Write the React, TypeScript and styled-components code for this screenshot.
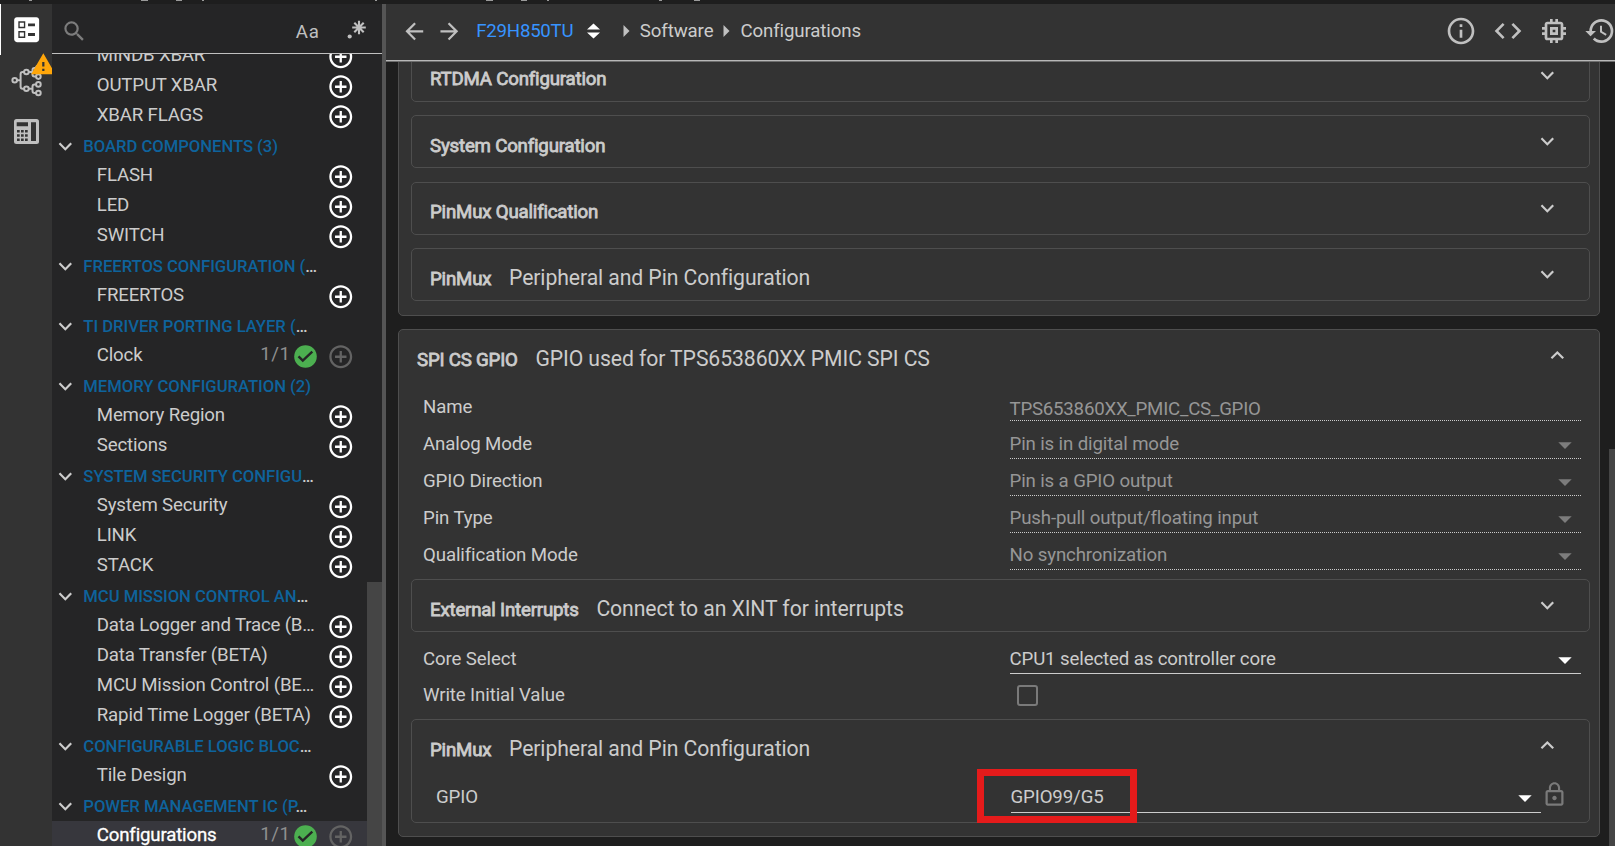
import React from 'react';
import styled, { createGlobalStyle, css } from 'styled-components';
import {
  MdAddCircleOutline,
  MdArrowBack,
  MdArrowDropDown,
  MdArrowForward,
  MdBallot,
  MdCode,
  MdExpandLess,
  MdExpandMore,
  MdHistory,
  MdInfoOutline,
  MdLockOutline,
  MdMemory,
  MdSearch,
  MdWarning,
} from 'react-icons/md';

const color = {
  base: '#1e1e1e',
  side: '#252526',
  panel: '#333333',
  border: '#4e4e4e',
  text: '#cccccc',
  icon: '#c0c0c0',
  dim: '#969696',
  heading: '#0e639c',
  link: '#3794ff',
};

const GlobalStyle = createGlobalStyle`
  * { box-sizing: border-box; }
  body {
    margin: 0;
    background: ${color.base};
    color: ${color.text};
    font-family: Roboto, "Liberation Sans", sans-serif;
    font-size: 18.67px;
    overflow: hidden;
  }
  svg { display: block; flex: none; }
`;

const Page = styled.div`
  display: flex;
  flex-direction: column;
  width: 1615px;
  height: 846px;
  overflow: hidden;
`;

const TopStrip = styled.div`
  flex: none;
  height: 4px;
`;

const Workspace = styled.div`
  display: flex;
  flex: 1;
  min-height: 0;
`;

/* ---------- activity rail ---------- */

const Rail = styled.nav`
  flex: none;
  width: 52px;
  background: ${color.panel};
  display: flex;
  flex-direction: column;
  overflow: hidden;
`;

const RailItem = styled.div<{ $active?: boolean }>`
  position: relative;
  height: 51px;
  display: flex;
  align-items: center;
  justify-content: center;
  border-left: 1px solid ${(p) => (p.$active ? '#fff' : 'transparent')};
  color: ${(p) => (p.$active ? '#fff' : color.icon)};
`;

const WarningBadge = styled.span`
  position: absolute;
  top: -4px;
  left: 28.5px;
  color: #ffa60a;
`;

/* ---------- component tree ---------- */

const Sidebar = styled.aside`
  flex: none;
  width: 330px;
  background: ${color.side};
  display: flex;
  flex-direction: column;
`;

const SearchBar = styled.div`
  flex: none;
  height: 50px;
  display: flex;
  align-items: center;
  padding: 5px 15px 0 9px;
  border-bottom: 1px solid ${color.icon};
  color: #7c7c7c;
`;

const MatchCase = styled.span`
  margin: 1px 27.5px 0 auto;
  color: ${color.icon};
  letter-spacing: 0.7px;
`;

const RegexButton = styled.span`
  margin-top: -2px;
`;

const TreeViewport = styled.div`
  display: flex;
  flex: 1;
  min-height: 0;
  overflow: hidden;
`;

const Tree = styled.div`
  flex: 1;
  min-width: 0;
  margin-top: -13px;
`;

const treeRow = css`
  display: flex;
  align-items: center;
  height: 30px;
  white-space: nowrap;
`;

const Category = styled.div`
  ${treeRow}
  gap: 4.7px;
`;

const CategoryLabel = styled.span`
  padding-top: 2px;
  font-size: 16.67px;
  font-weight: 500;
  line-height: 28px;
  letter-spacing: -0.04px;
  & > b { color: ${color.heading}; font-weight: 500; }
`;

const CategoryChevron = styled.span`
  color: ${color.text};
  font-size: 26.67px;
`;

const Item = styled.div<{ $selected?: boolean }>`
  ${treeRow}
  width: 315px;
  padding: 0 12.6px 0 44.8px;
  color: ${(p) => (p.$selected ? '#fff' : color.text)};
  background: ${(p) => (p.$selected ? '#37373d' : 'transparent')};
`;

const ItemLabel = styled.span<{ $strong?: boolean }>`
  flex: 1;
  line-height: 26px;
  padding-bottom: 2px;
  letter-spacing: -0.18px;
  -webkit-text-stroke: ${(p) => (p.$strong ? '0.3px' : '0')};
`;

const Count = styled.span`
  margin-right: 3.3px;
  padding-bottom: 5px;
  color: #8f8f8f;
  letter-spacing: 0.6px;
`;

const AddButton = styled.span<{ $disabled?: boolean }>`
  margin: 1.5px 0 0 10px;
  color: ${(p) => (p.$disabled ? '#636363' : '#fff')};
`;

const TreeScrollbar = styled.div`
  flex: none;
  width: 15px;
  margin-top: 528px;
  background: #454545;
`;

const Splitter = styled.div`
  flex: none;
  width: 4px;
  background: #555;
`;

/* ---------- main editor ---------- */

const Main = styled.main`
  flex: 1;
  min-width: 0;
  display: flex;
  flex-direction: column;
`;

const Toolbar = styled.header`
  flex: none;
  height: 58px;
  display: flex;
  align-items: center;
  padding: 0 0 3px 14.5px;
  background: ${color.panel};
  border-bottom: 1px solid #6e6e6e;
  box-shadow: inset 0 -1px 0 #b8b8b8;
  color: ${color.icon};
`;

const NavArrows = styled.div`
  display: flex;
  gap: 8.5px;
`;

const Device = styled.span`
  margin: -1px 13.5px 0 14px;
  color: ${color.link};
  letter-spacing: -0.25px;
`;

const Crumb = styled.span`
  margin: -1px 10px 0 10px;
  color: ${color.text};
  letter-spacing: -0.12px;
`;

const CrumbLead = styled.span`
  width: 23px;
`;

const ToolbarActions = styled.div`
  display: flex;
  align-items: center;
  gap: 14.3px;
  margin: 0 -1.2px 0 auto;
`;

const Body = styled.div`
  flex: 1;
  min-height: 0;
  display: flex;
  justify-content: space-between;
  overflow: hidden;
`;

const Cards = styled.div`
  width: 1202px;
  margin: -28px 0 0 12px;
  display: flex;
  flex-direction: column;
  gap: 13px;
`;

const Card = styled.section`
  flex: none;
  background: ${color.panel};
  border: 1px solid ${color.border};
  border-radius: 5px;
`;

const ModuleStack = styled.div`
  display: flex;
  flex-direction: column;
  gap: 13.33px;
  padding: 14px 9px 14px 12px;
`;

const Nested = styled.section`
  border: 1px solid ${color.border};
  border-radius: 5px;
`;

const CardHead = styled.div`
  display: flex;
  height: 51px;
  padding: 0 28.5px 0 18px;
  color: ${color.text};
`;

const CardTitle = styled.div<{ $single?: boolean }>`
  display: flex;
  flex: 1;
  align-items: baseline;
  gap: 17.7px;
  padding-top: ${(p) => (p.$single ? 16.4 : 17)}px;
  white-space: nowrap;
`;

const ShortName = styled.span`
  line-height: 26px;
  letter-spacing: -0.19px;
  -webkit-text-stroke: 0.8px currentColor;
`;

const LongName = styled.span`
  font-size: 21.2px;
  line-height: 24px;
  letter-spacing: -0.09px;
`;

const Toggle = styled.span`
  padding-top: 12px;
  font-size: 26.67px;
`;

const CardBody = styled.div`
  padding: 8px 9px 13px 12px;
`;

const Field = styled.div<{ $height?: number }>`
  display: grid;
  grid-template-columns: 587px 571px;
  height: ${(p) => p.$height ?? 37}px;
  padding-left: 12px;
`;

const FieldLabel = styled.label<{ $height?: number }>`
  line-height: ${(p) => p.$height ?? 37}px;
  letter-spacing: -0.12px;
`;

const Value = styled.div<{ $disabled?: boolean; $text?: boolean }>`
  display: flex;
  align-items: center;
  justify-content: space-between;
  height: ${(p) => (p.$text ? 32 : 33)}px;
  padding-top: ${(p) => (p.$text ? 9 : 4)}px;
  border-bottom: 1px ${(p) => (p.$disabled ? 'dotted' : 'solid')} ${color.text};
  color: ${(p) => (p.$disabled ? color.dim : color.text)};
  letter-spacing: ${(p) => (p.$text ? -0.22 : -0.13)}px;
  text-indent: -0.5px;
  white-space: nowrap;
`;

const Caret = styled.span<{ $disabled?: boolean }>`
  margin-top: 2px;
  font-size: 32px;
  color: ${(p) => (p.$disabled ? '#7c7c7c' : '#fff')};
`;

const Checkbox = styled.span`
  width: 21px;
  height: 21px;
  margin: 7px 0 0 7px;
  border: 2px solid #7a7a7a;
  border-radius: 3px;
`;

const CoreGroup = styled.div`
  padding: 9px 0 6px;
`;

const SectionGap = styled.div`
  padding-top: 5px;
`;

const PinRow = styled.div`
  position: relative;
  display: grid;
  grid-template-columns: 575px 530px 28px;
  height: 36px;
  margin: 8px 0 7px;
  padding-left: 24px;
`;

const PinLabel = styled.label`
  line-height: 36px;
  letter-spacing: -0.1px;
`;

const PinValue = styled(Value)`
  height: 34px;
  padding-top: 3px;
`;

const Lock = styled.span`
  padding-top: 2px;
  color: #7a7a7a;
  font-size: 27px;
`;

const Highlight = styled.span`
  position: absolute;
  left: 565px;
  top: -10px;
  width: 160px;
  height: 54px;
  border: 7px solid #e51b1b;
`;

const MainScrollbar = styled.div`
  width: 6px;
  margin-top: 387px;
  background: #454545;
`;

/* ---------- drawings ---------- */

const TitleRemnant = () => (
  <svg width="720" height="4" aria-hidden="true">
    <path
      d="M29 .5h3M141 .5h7M176 .5h6M202 .5h2M375 .5h2M486 .5h7M521 .5h6M547 .5h2M659 .5h3M694 .5h6"
      stroke="#9a9a9a"
    />
  </svg>
);

const TreeGlyph = () => (
  <svg width="34" height="32" viewBox="10 65 34 32" fill="none" stroke="currentColor" strokeWidth="2">
    <circle cx="14.7" cy="80.3" r="2.3" />
    <circle cx="26.4" cy="72" r="2.3" />
    <circle cx="26.4" cy="88.8" r="2.3" />
    <circle cx="38.4" cy="68" r="2.3" />
    <circle cx="38.4" cy="76.6" r="2.3" />
    <circle cx="38.4" cy="84.4" r="2.3" />
    <circle cx="38.4" cy="93" r="2.3" />
    <path d="M17 80.3h3.6M24 72h-1.4q-2 0-2 2v12.800q0 2 2 2H24M28.700 72h3.600M36 68h-1.500q-2 0-2 2v4.600q0 2 2 2H36M28.700 88.800h3.600M36 84.400h-1.500q-2 0-2 2V91q0 2 2 2H36" />
  </svg>
);

const CalculatorGlyph = () => (
  <svg width="25" height="25" viewBox="0 0 25 25">
    <rect width="25" height="25" rx="2.500" fill="currentColor" />
    <g fill="#333">
      <path d="M2.700 3.300H14V7.300H2.700zM17 3.300h5v18.700h-5z" />
      <path d="M3 11h2.700v2.600H3zM7 11h2.700v2.600H7zM11 11h2.700v2.600H11zM3 15.200h2.700v2.600H3zM7 15.200h2.700v2.600H7zM11 15.200h2.700v2.600H11zM3 19.400h2.700V22H3zM7 19.400h2.700V22H7zM11 19.400h2.700V22H11z" />
    </g>
  </svg>
);

const RegexGlyph = () => (
  <svg width="20" height="20" viewBox="347 23 20 20" stroke="#c0c0c0" strokeWidth="2.100">
    <circle cx="349.700" cy="39.500" r="2.100" fill="#c0c0c0" stroke="none" />
    <path d="M359 23.700v13.600M352.200 30.500h13.600M354.300 25.800l9.400 9.400M363.700 25.800l-9.400 9.400" />
  </svg>
);

const CheckGlyph = () => (
  <svg width="23" height="23" viewBox="-11.500 -11.500 23 23">
    <circle r="11.300" fill="#4caf50" />
    <path d="M-7-.2l4.300 4.300L6.800-4.800" fill="none" stroke="#252526" strokeWidth="2.400" />
  </svg>
);

const SwitchGlyph = () => (
  <svg width="13" height="16" viewBox="0 0 13 16" fill="#fff">
    <path d="M6.500.5L13 6.500H0zM6.500 15.500L13 9.500H0z" />
  </svg>
);

const CrumbGlyph = () => (
  <svg width="7" height="12" viewBox="0 0 7 12" fill="#c0c0c0">
    <path d="M.5 0L6.500 6L.5 12z" />
  </svg>
);

/* ---------- data ---------- */

type Row =
  | { kind: 'category'; label: string; cut?: boolean }
  | { kind: 'item'; label: string; count?: string; selected?: boolean };

const cat = (label: string, cut = false): Row => ({ kind: 'category', label, cut });
const item = (label: string, count?: string, selected?: boolean): Row => ({ kind: 'item', label, count, selected });

const rows: Row[] = [
  item('MINDB XBAR'),
  item('OUTPUT XBAR'),
  item('XBAR FLAGS'),
  cat('BOARD COMPONENTS (3)'),
  item('FLASH'),
  item('LED'),
  item('SWITCH'),
  cat('FREERTOS CONFIGURATION (', true),
  item('FREERTOS'),
  cat('TI DRIVER PORTING LAYER (', true),
  item('Clock', '1/1'),
  cat('MEMORY CONFIGURATION (2)'),
  item('Memory Region'),
  item('Sections'),
  cat('SYSTEM SECURITY CONFIGU', true),
  item('System Security'),
  item('LINK'),
  item('STACK'),
  cat('MCU MISSION CONTROL AN', true),
  item('Data Logger and Trace (B…'),
  item('Data Transfer (BETA)'),
  item('MCU Mission Control (BE…'),
  item('Rapid Time Logger (BETA)'),
  cat('CONFIGURABLE LOGIC BLOC', true),
  item('Tile Design'),
  cat('POWER MANAGEMENT IC (P', true),
  item('Configurations', '1/1', true),
];

const gpioFields = [
  ['Analog Mode', 'Pin is in digital mode'],
  ['GPIO Direction', 'Pin is a GPIO output'],
  ['Pin Type', 'Push-pull output/floating input'],
  ['Qualification Mode', 'No synchronization'],
];

/* ---------- composed parts ---------- */

const TreeRow = ({ row }: { row: Row }) =>
  row.kind === 'category' ? (
    <Category>
      <CategoryChevron>
        <MdExpandMore />
      </CategoryChevron>
      <CategoryLabel>
        <b>{row.label}</b>
        {row.cut && '…'}
      </CategoryLabel>
    </Category>
  ) : (
    <Item $selected={row.selected}>
      <ItemLabel $strong={row.selected}>{row.label}</ItemLabel>
      {row.count && (
        <>
          <Count>{row.count}</Count>
          <CheckGlyph />
        </>
      )}
      <AddButton $disabled={!!row.count}>
        <MdAddCircleOutline size={27.5} />
      </AddButton>
    </Item>
  );

const Head = ({ name, long, open }: { name: string; long?: string; open?: boolean }) => (
  <CardHead>
    <CardTitle $single={!long}>
      <ShortName>{name}</ShortName>
      {long && <LongName>{long}</LongName>}
    </CardTitle>
    <Toggle>{open ? <MdExpandLess /> : <MdExpandMore />}</Toggle>
  </CardHead>
);

const DropCaret = ({ disabled }: { disabled?: boolean }) => (
  <Caret $disabled={disabled}>
    <MdArrowDropDown />
  </Caret>
);

export default function App() {
  return (
    <>
      <GlobalStyle />
      <Page>
        <TopStrip>
          <TitleRemnant />
        </TopStrip>
        <Workspace>
          <Rail>
            <RailItem $active>
              <MdBallot size={33.3} />
            </RailItem>
            <RailItem>
              <TreeGlyph />
              <WarningBadge>
                <MdWarning size={26.67} />
              </WarningBadge>
            </RailItem>
            <RailItem>
              <CalculatorGlyph />
            </RailItem>
          </Rail>

          <Sidebar>
            <SearchBar>
              <MdSearch size={26.67} />
              <MatchCase>Aa</MatchCase>
              <RegexButton>
                <RegexGlyph />
              </RegexButton>
            </SearchBar>
            <TreeViewport>
              <Tree>
                {rows.map((row) => (
                  <TreeRow key={row.label} row={row} />
                ))}
              </Tree>
              <TreeScrollbar />
            </TreeViewport>
          </Sidebar>
          <Splitter />

          <Main>
            <Toolbar>
              <NavArrows>
                <MdArrowBack size={26.67} />
                <MdArrowForward size={26.67} />
              </NavArrows>
              <Device>F29H850TU</Device>
              <SwitchGlyph />
              <CrumbLead />
              <CrumbGlyph />
              <Crumb>Software</Crumb>
              <CrumbGlyph />
              <Crumb>Configurations</Crumb>
              <ToolbarActions>
                <MdInfoOutline size={32} />
                <MdCode size={32} />
                <MdMemory size={32} />
                <MdHistory size={32} />
              </ToolbarActions>
            </Toolbar>

            <Body>
              <Cards>
                <Card>
                  <ModuleStack>
                    <Nested>
                      <Head name="RTDMA Configuration" />
                    </Nested>
                    <Nested>
                      <Head name="System Configuration" />
                    </Nested>
                    <Nested>
                      <Head name="PinMux Qualification" />
                    </Nested>
                    <Nested>
                      <Head name="PinMux" long="Peripheral and Pin Configuration" />
                    </Nested>
                  </ModuleStack>
                </Card>

                <Card>
                  <Head name="SPI CS GPIO" long="GPIO used for TPS653860XX PMIC SPI CS" open />
                  <CardBody>
                    <Field>
                      <FieldLabel>Name</FieldLabel>
                      <Value $disabled $text>
                        TPS653860XX_PMIC_CS_GPIO
                      </Value>
                    </Field>
                    {gpioFields.map(([label, value]) => (
                      <Field key={label}>
                        <FieldLabel>{label}</FieldLabel>
                        <Value $disabled>
                          {value}
                          <DropCaret disabled />
                        </Value>
                      </Field>
                    ))}
                    <SectionGap>
                      <Nested>
                        <Head name="External Interrupts" long="Connect to an XINT for interrupts" />
                      </Nested>
                    </SectionGap>
                    <CoreGroup>
                      <Field>
                        <FieldLabel>Core Select</FieldLabel>
                        <Value>
                          CPU1 selected as controller core
                          <DropCaret />
                        </Value>
                      </Field>
                      <Field $height={35}>
                        <FieldLabel $height={35}>Write Initial Value</FieldLabel>
                        <Checkbox />
                      </Field>
                    </CoreGroup>
                    <Nested>
                      <Head name="PinMux" long="Peripheral and Pin Configuration" open />
                      <PinRow>
                        <PinLabel>GPIO</PinLabel>
                        <PinValue>
                          GPIO99/G5
                          <DropCaret />
                        </PinValue>
                        <Lock>
                          <MdLockOutline />
                        </Lock>
                        <Highlight />
                      </PinRow>
                    </Nested>
                  </CardBody>
                </Card>
              </Cards>
              <MainScrollbar />
            </Body>
          </Main>
        </Workspace>
      </Page>
    </>
  );
}
